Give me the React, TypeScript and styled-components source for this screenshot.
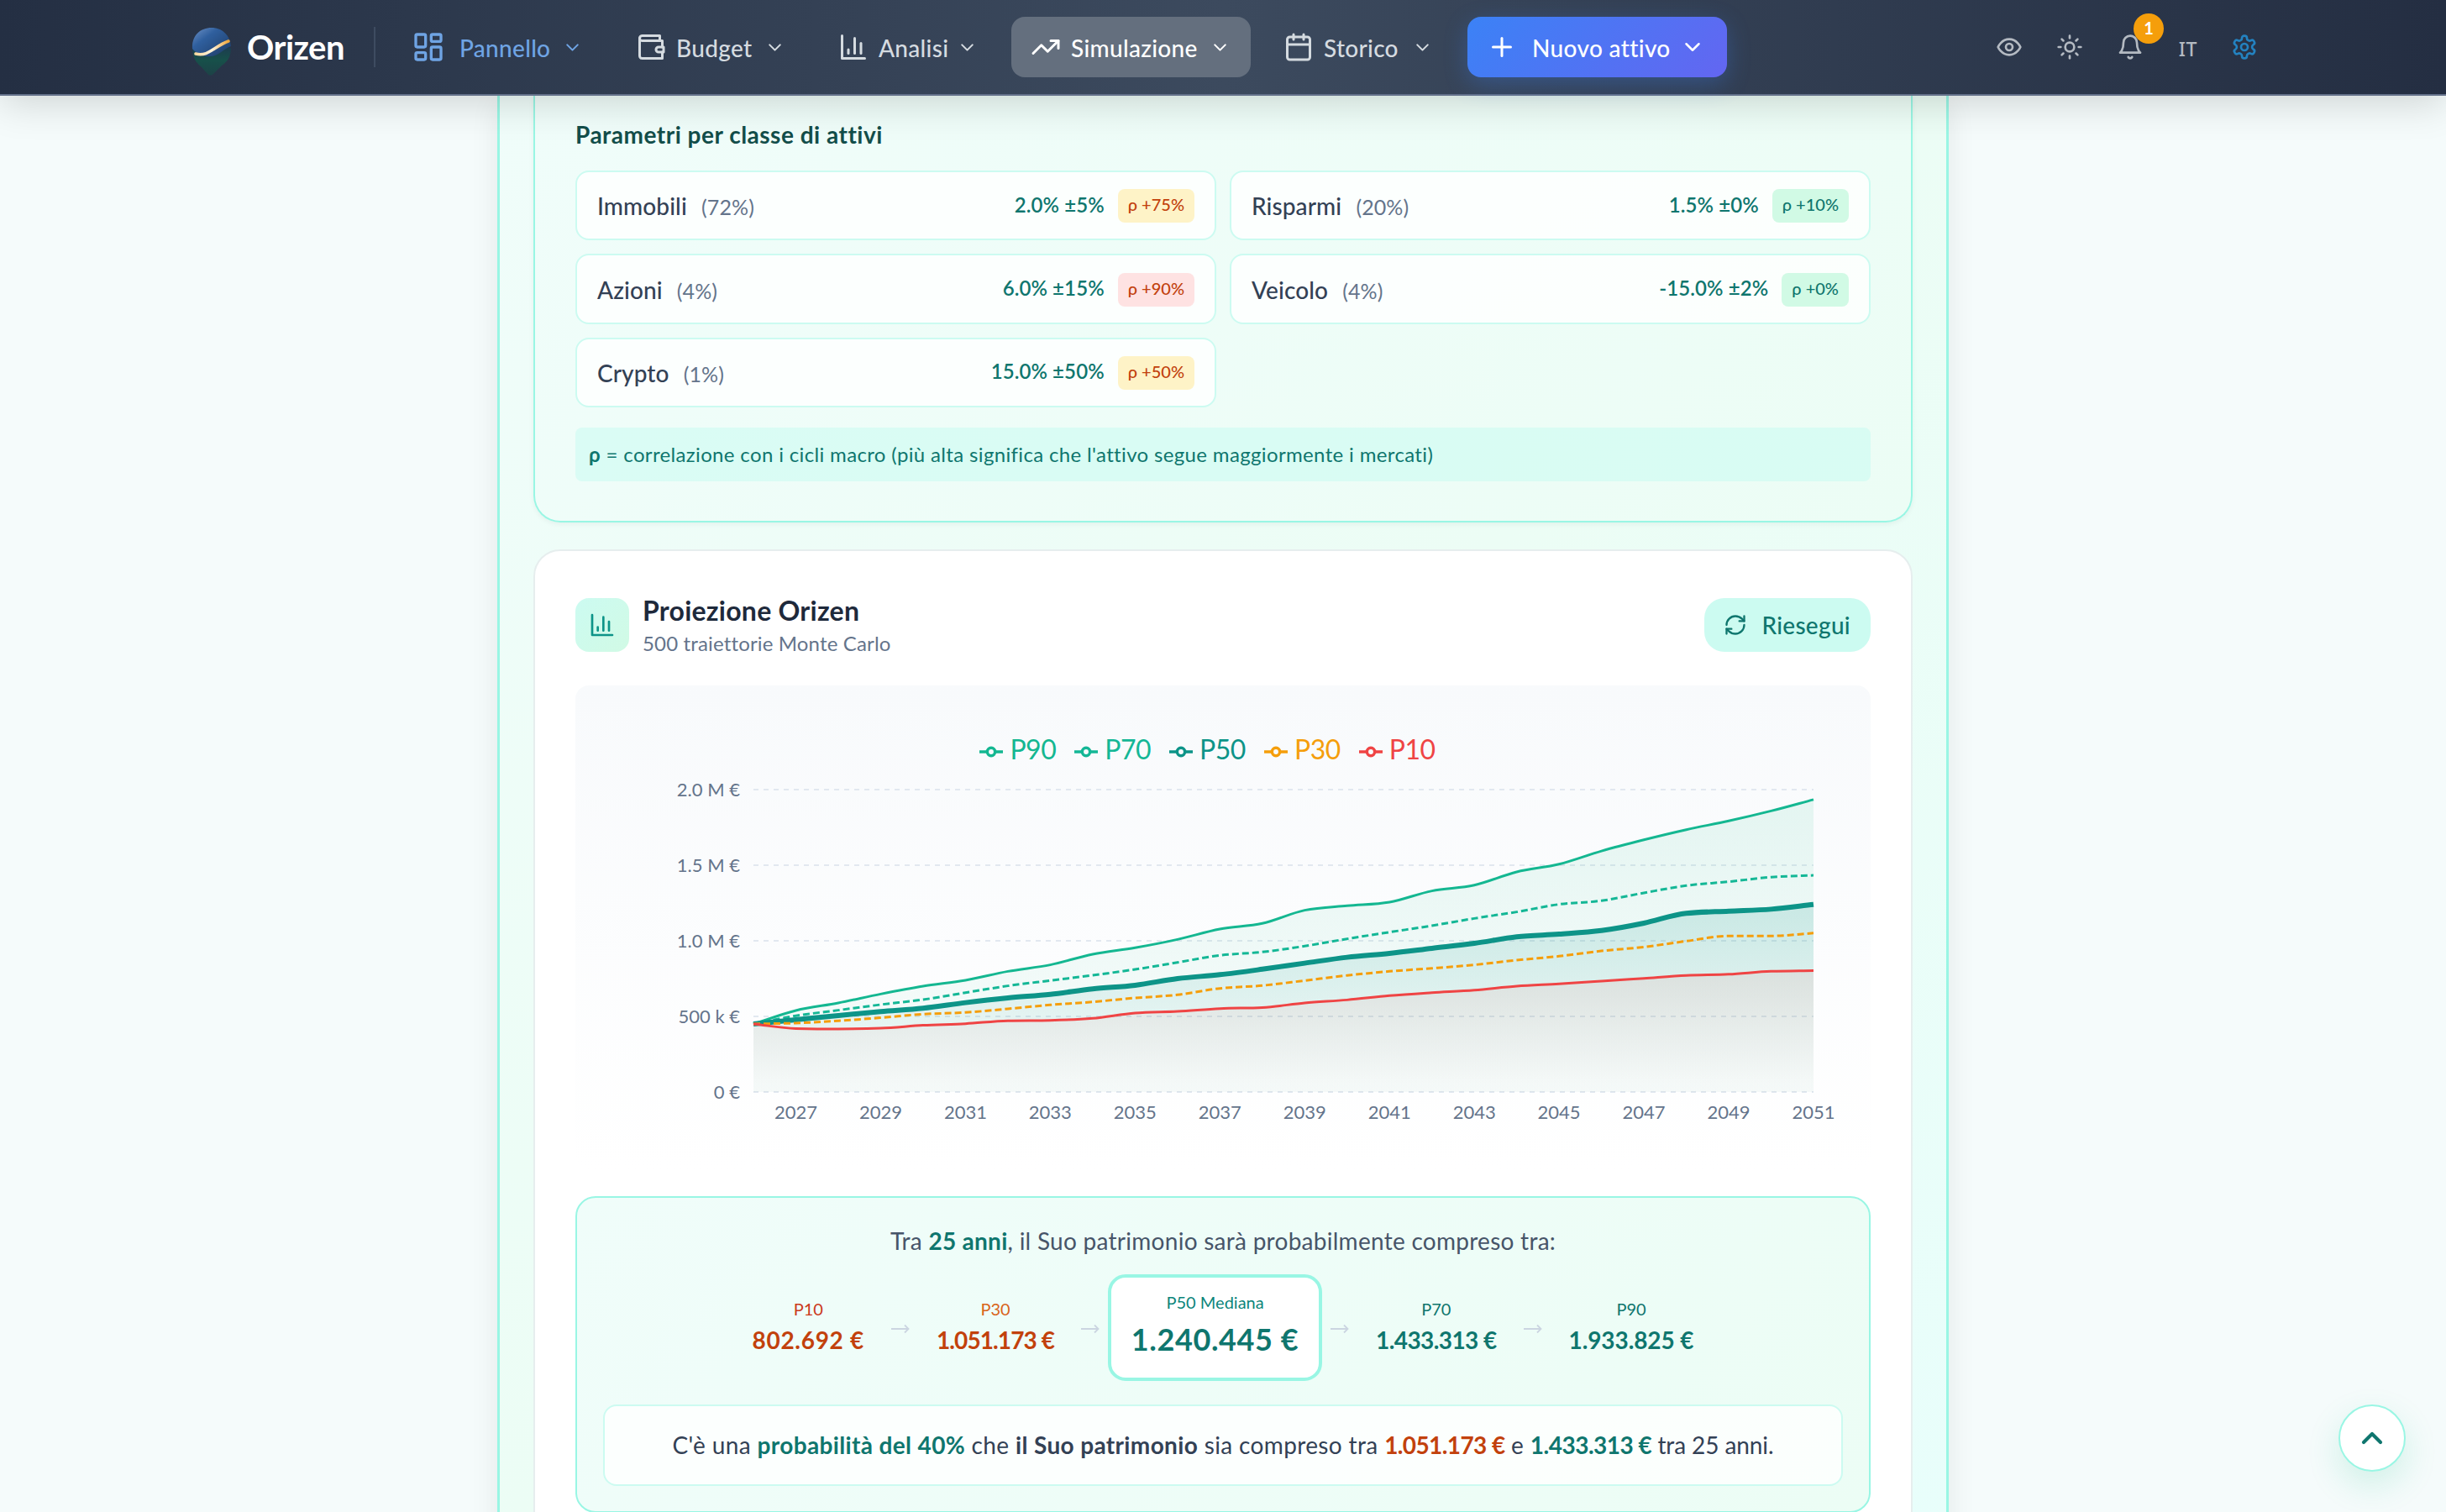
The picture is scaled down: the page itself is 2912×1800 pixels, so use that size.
import { ReactNode } from "react";
import styled, { createGlobalStyle } from "styled-components";

type Tone = "low" | "mid" | "high";

interface Asset {
  name: string;
  share: string;
  rate: string;
  rho: string;
  tone: Tone;
}

const assets: Asset[] = [
  { name: "Immobili", share: "72%", rate: "2.0% ±5%", rho: "+75%", tone: "mid" },
  { name: "Risparmi", share: "20%", rate: "1.5% ±0%", rho: "+10%", tone: "low" },
  { name: "Azioni", share: "4%", rate: "6.0% ±15%", rho: "+90%", tone: "high" },
  { name: "Veicolo", share: "4%", rate: "-15.0% ±2%", rho: "+0%", tone: "low" },
  { name: "Crypto", share: "1%", rate: "15.0% ±50%", rho: "+50%", tone: "mid" },
];

// yearly values in k€, 2026 - 2051
const p90 = [450, 539, 589, 648, 700, 739, 798, 841, 911, 954, 1009, 1078, 1115, 1202, 1232, 1256, 1330, 1368, 1456, 1507, 1594, 1668, 1735, 1793, 1859, 1934];
const p70 = [450, 504, 541, 578, 611, 657, 702, 737, 772, 811, 857, 904, 926, 965, 1013, 1057, 1100, 1148, 1191, 1241, 1265, 1317, 1365, 1391, 1421, 1433];
const p50 = [450, 478, 506, 532, 554, 591, 622, 646, 682, 706, 750, 776, 812, 852, 891, 917, 950, 983, 1026, 1044, 1068, 1117, 1182, 1196, 1209, 1240];
const p30 = [450, 456, 471, 491, 515, 526, 550, 576, 596, 622, 643, 685, 704, 737, 771, 798, 818, 841, 872, 898, 933, 959, 998, 1032, 1032, 1051];
const p10 = [450, 420, 417, 422, 441, 452, 471, 474, 487, 522, 533, 552, 559, 589, 609, 637, 657, 674, 700, 715, 733, 752, 771, 779, 798, 803];

const legend = [
  { label: "P90", color: "#14b791" },
  { label: "P70", color: "#14b796" },
  { label: "P50", color: "#0d9488" },
  { label: "P30", color: "#f59e0b" },
  { label: "P10", color: "#ef4444" },
];

const PLOT = { left: 212, right: 1474, top: 24, bottom: 384, max: 2000 };

const toX = (i: number) => PLOT.left + (i * (PLOT.right - PLOT.left)) / 25;
const toY = (v: number) =>
  PLOT.bottom - (v / PLOT.max) * (PLOT.bottom - PLOT.top);

// monotone cubic through the points, so the curve never overshoots
const linePath = (values: number[]) => {
  const pts = values.map((v, i) => ({ x: toX(i), y: toY(v) }));
  const n = pts.length;
  const slopes: number[] = [];
  for (let i = 0; i < n - 1; i++) {
    slopes.push((pts[i + 1].y - pts[i].y) / (pts[i + 1].x - pts[i].x));
  }
  const tangents = pts.map((_, i) => {
    if (i === 0) return slopes[0];
    if (i === n - 1) return slopes[n - 2];
    const a = slopes[i - 1];
    const b = slopes[i];
    if (a * b <= 0) return 0;
    return (
      Math.sign(a) *
      2 *
      Math.min(Math.abs(a), Math.abs(b), Math.abs(a + b) / 4)
    );
  });
  let d = `M${pts[0].x},${pts[0].y}`;
  for (let i = 0; i < n - 1; i++) {
    const h = (pts[i + 1].x - pts[i].x) / 3;
    d += `C${pts[i].x + h},${pts[i].y + tangents[i] * h},${pts[i + 1].x - h},${
      pts[i + 1].y - tangents[i + 1] * h
    },${pts[i + 1].x},${pts[i + 1].y}`;
  }
  return d;
};

const areaPath = (values: number[]) =>
  `${linePath(values)}L${PLOT.right},${PLOT.bottom}L${PLOT.left},${PLOT.bottom}Z`;

const Icon = ({
  size = 36,
  stroke = 2,
  children,
}: {
  size?: number;
  stroke?: number;
  children: ReactNode;
}) => (
  <IconSvg
    width={size}
    height={size}
    viewBox="0 0 24 24"
    fill="none"
    stroke="currentColor"
    strokeWidth={stroke}
    strokeLinecap="round"
    strokeLinejoin="round"
  >
    {children}
  </IconSvg>
);

const ChevronDown = ({ size = 25 }: { size?: number }) => (
  <Icon size={size}>
    <path d="m6 9 6 6 6-6" />
  </Icon>
);

const BarsIcon = ({ size }: { size: number }) => (
  <Icon size={size}>
    <path d="M3 3v18h18" />
    <path d="M18 17V9" />
    <path d="M13 17V5" />
    <path d="M8 17v-3" />
  </Icon>
);

const Arrow = () => (
  <ArrowSvg width="22" height="12" viewBox="0 0 22 12">
    <path d="M0 6h20M16 1.5 20.5 6 16 10.5" />
  </ArrowSvg>
);

const Logo = () => (
  <svg width="48" height="60" viewBox="0 0 48 60">
    <defs>
      <linearGradient id="logoSky" x1="0" y1="0" x2="1" y2="1">
        <stop offset="0" stopColor="#6f93c8" />
        <stop offset="0.35" stopColor="#2f5f9e" />
        <stop offset="1" stopColor="#1d3a63" />
      </linearGradient>
      <linearGradient id="logoLand" x1="0" y1="0" x2="0" y2="1">
        <stop offset="0" stopColor="#1c3d4f" />
        <stop offset="0.45" stopColor="#17504a" />
        <stop offset="1" stopColor="#1d4247" />
      </linearGradient>
      <linearGradient id="logoSun" x1="0" y1="0" x2="1" y2="0">
        <stop offset="0" stopColor="#f8d9a0" />
        <stop offset="0.5" stopColor="#fff3dc" />
        <stop offset="1" stopColor="#f0a63a" />
      </linearGradient>
    </defs>
    <path
      d="M1 26C1 38 6 44 11 48l9 10c2 1 4 1 6-1l10-10c6-4 11-10 11-21Z"
      fill="url(#logoLand)"
    />
    <path
      d="M1 27C0 12 10 2 24 2c12 0 22 9 23 22-9 3-15 12-24 12-8 1-16-2-22-9Z"
      fill="url(#logoSky)"
    />
    <path
      d="M5 33c15 4 22-9 39-15"
      fill="none"
      stroke="url(#logoSun)"
      strokeWidth="3.5"
      strokeLinecap="round"
    />
  </svg>
);

const Header = () => (
  <Bar>
    <Brand>
      <Logo />
      <BrandName>Orizen</BrandName>
    </Brand>
    <Nav>
      <NavItem $width={251} $tone="current">
        <Icon size={40}>
          <rect x="3" y="3" width="7" height="9" rx="1" />
          <rect x="14" y="3" width="7" height="5" rx="1" />
          <rect x="14" y="12" width="7" height="9" rx="1" />
          <rect x="3" y="16" width="7" height="5" rx="1" />
        </Icon>
        <span>Pannello</span>
        <ChevronDown />
      </NavItem>
      <NavItem $width={225}>
        <Icon>
          <path d="M21 12V7H5a2 2 0 0 1 0-4h14v4" />
          <path d="M3 5v14a2 2 0 0 0 2 2h16v-5" />
          <path d="M18 12a2 2 0 0 0 0 4h4v-4Z" />
        </Icon>
        <span>Budget</span>
        <ChevronDown />
      </NavItem>
      <NavItem $width={213}>
        <BarsIcon size={36} />
        <span>Analisi</span>
        <ChevronDown />
      </NavItem>
      <NavItem $width={285} $tone="open">
        <Icon>
          <path d="m22 7-8.5 8.5-5-5L2 17" />
          <path d="M16 7h6v6" />
        </Icon>
        <span>Simulazione</span>
        <ChevronDown />
      </NavItem>
      <NavItem $width={225}>
        <Icon>
          <rect x="3" y="4" width="18" height="18" rx="2" />
          <path d="M16 2v4" />
          <path d="M8 2v4" />
          <path d="M3 10h18" />
        </Icon>
        <span>Storico</span>
        <ChevronDown />
      </NavItem>
      <NewAsset>
        <Icon>
          <path d="M5 12h14" />
          <path d="M12 5v14" />
        </Icon>
        <span>Nuovo attivo</span>
        <ChevronDown size={30} />
      </NewAsset>
    </Nav>
    <Tools>
      <Tool>
        <Icon size={32}>
          <path d="M2 12s3-7 10-7 10 7 10 7-3 7-10 7-10-7-10-7Z" />
          <circle cx="12" cy="12" r="3" />
        </Icon>
      </Tool>
      <Tool>
        <Icon size={32}>
          <circle cx="12" cy="12" r="4" />
          <path d="M12 2v2" />
          <path d="M12 20v2" />
          <path d="m4.93 4.93 1.41 1.41" />
          <path d="m17.66 17.66 1.41 1.41" />
          <path d="M2 12h2" />
          <path d="M20 12h2" />
          <path d="m6.34 17.66-1.41 1.41" />
          <path d="m19.07 4.93-1.41 1.41" />
        </Icon>
      </Tool>
      <Tool>
        <Icon size={32}>
          <path d="M6 8a6 6 0 0 1 12 0c0 7 3 9 3 9H3s3-2 3-9" />
          <path d="M10.3 21a1.94 1.94 0 0 0 3.4 0" />
        </Icon>
        <Count>1</Count>
      </Tool>
      <Language>IT</Language>
      <Tool $accent>
        <Icon size={32}>
          <path d="M12.22 2h-.44a2 2 0 0 0-2 2v.18a2 2 0 0 1-1 1.73l-.43.25a2 2 0 0 1-2 0l-.15-.08a2 2 0 0 0-2.73.73l-.22.38a2 2 0 0 0 .73 2.73l.15.1a2 2 0 0 1 1 1.72v.51a2 2 0 0 1-1 1.74l-.15.09a2 2 0 0 0-.73 2.73l.22.38a2 2 0 0 0 2.73.73l.15-.08a2 2 0 0 1 2 0l.43.25a2 2 0 0 1 1 1.73V20a2 2 0 0 0 2 2h.44a2 2 0 0 0 2-2v-.18a2 2 0 0 1 1-1.73l.43-.25a2 2 0 0 1 2 0l.15.08a2 2 0 0 0 2.73-.73l.22-.39a2 2 0 0 0-.73-2.73l-.15-.08a2 2 0 0 1-1-1.74v-.5a2 2 0 0 1 1-1.74l.15-.09a2 2 0 0 0 .73-2.73l-.22-.38a2 2 0 0 0-2.73-.73l-.15.08a2 2 0 0 1-2 0l-.43-.25a2 2 0 0 1-1-1.73V4a2 2 0 0 0-2-2z" />
          <circle cx="12" cy="12" r="3" />
        </Icon>
      </Tool>
    </Tools>
  </Bar>
);

const AssetParams = () => (
  <ParamsCard>
    <ParamsTitle>Parametri per classe di attivi</ParamsTitle>
    <AssetGrid>
      {assets.map((asset) => (
        <AssetRow key={asset.name}>
          <AssetName>
            {asset.name} <Share>({asset.share})</Share>
          </AssetName>
          <Rate>{asset.rate}</Rate>
          <Rho $tone={asset.tone}>ρ {asset.rho}</Rho>
        </AssetRow>
      ))}
    </AssetGrid>
    <RhoNote>
      <b>ρ</b> = correlazione con i cicli macro (più alta significa che l'attivo
      segue maggiormente i mercati)
    </RhoNote>
  </ParamsCard>
);

const Chart = () => (
  <ChartBox>
    <Legend>
      {legend.map(({ label, color }) => (
        <LegendItem key={label} $color={color}>
          <svg width="28" height="28" viewBox="0 0 32 32">
            <path
              d="M0,16h10.667A5.333,5.333,0,1,1,21.333,16H32M21.333,16A5.333,5.333,0,1,1,10.667,16"
              fill="none"
              stroke={color}
              strokeWidth="4"
            />
          </svg>
          {label}
        </LegendItem>
      ))}
    </Legend>
    <Plot width="1540" height="476" viewBox="0 0 1540 476">
      <defs>
        <linearGradient id="fill90" x1="0" y1="0" x2="0" y2="1">
          <stop offset="0.05" stopColor="#10b981" stopOpacity="0.09" />
          <stop offset="0.95" stopColor="#10b981" stopOpacity="0.02" />
        </linearGradient>
        <linearGradient id="fill50" x1="0" y1="0" x2="0" y2="1">
          <stop offset="0.05" stopColor="#0d9488" stopOpacity="0.15" />
          <stop offset="0.95" stopColor="#0d9488" stopOpacity="0.02" />
        </linearGradient>
        <linearGradient id="fill10" x1="0" y1="0" x2="0" y2="1">
          <stop offset="0.05" stopColor="#ef4444" stopOpacity="0.08" />
          <stop offset="0.95" stopColor="#ef4444" stopOpacity="0.01" />
        </linearGradient>
      </defs>
      {[2000, 1500, 1000, 500, 0].map((v) => (
        <line
          key={v}
          x1={PLOT.left}
          x2={PLOT.right}
          y1={toY(v)}
          y2={toY(v)}
          stroke="#e2e8f0"
          strokeWidth="2"
          strokeDasharray="6 6"
        />
      ))}
      <path d={areaPath(p90)} fill="url(#fill90)" />
      <path d={areaPath(p50)} fill="url(#fill50)" />
      <path d={areaPath(p10)} fill="url(#fill10)" />
      <Curve d={linePath(p90)} stroke="#14b791" $width={3} />
      <Curve d={linePath(p70)} stroke="#14b796" $width={3} $dash="8 4" />
      <Curve d={linePath(p50)} stroke="#0d9488" $width={6} />
      <Curve d={linePath(p30)} stroke="#f59e0b" $width={3} $dash="8 4" />
      <Curve d={linePath(p10)} stroke="#ef4444" $width={3} />
      {["2.0 M €", "1.5 M €", "1.0 M €", "500 k €", "0 €"].map((label, i) => (
        <AxisText key={label} x={196} y={toY(2000 - i * 500) + 8} textAnchor="end">
          {label}
        </AxisText>
      ))}
      {Array.from({ length: 13 }, (_, i) => (
        <AxisText key={i} x={toX(i * 2 + 1)} y={416} textAnchor="middle">
          {2027 + i * 2}
        </AxisText>
      ))}
    </Plot>
  </ChartBox>
);

const Projection = () => (
  <ProjectionCard>
    <CardHeader>
      <IconTile>
        <BarsIcon size={32} />
      </IconTile>
      <Titles>
        <CardTitle>Proiezione Orizen</CardTitle>
        <CardSubtitle>500 traiettorie Monte Carlo</CardSubtitle>
      </Titles>
      <RerunButton>
        <Icon size={28}>
          <path d="M3 12a9 9 0 0 1 9-9 9.75 9.75 0 0 1 6.74 2.74L21 8" />
          <path d="M21 3v5h-5" />
          <path d="M21 12a9 9 0 0 1-9 9 9.75 9.75 0 0 1-6.74-2.74L3 16" />
          <path d="M8 16H3v5" />
        </Icon>
        Riesegui
      </RerunButton>
    </CardHeader>
    <Chart />
    <Summary>
      <Lead>
        Tra <Strong $color="#0f766e">25 anni</Strong>, il Suo patrimonio sarà
        probabilmente compreso tra:
      </Lead>
      <Stats>
        <Stat>
          <StatLabel $color="#cb3a1c">P10</StatLabel>
          <StatValue $color="#c2410c">802.692 €</StatValue>
        </Stat>
        <Arrow />
        <Stat>
          <StatLabel $color="#d9641a">P30</StatLabel>
          <StatValue $color="#c2410c" $spacing={-0.9}>
            1.051.173 €
          </StatValue>
        </Stat>
        <Arrow />
        <Median>
          <StatLabel $color="#0d857b">P50 Mediana</StatLabel>
          <MedianValue>1.240.445 €</MedianValue>
        </Median>
        <Arrow />
        <Stat>
          <StatLabel $color="#0f766e">P70</StatLabel>
          <StatValue $color="#0f766e" $spacing={-0.6}>
            1.433.313 €
          </StatValue>
        </Stat>
        <Arrow />
        <Stat>
          <StatLabel $color="#0f766e">P90</StatLabel>
          <StatValue $color="#0f766e" $spacing={-0.1}>
            1.933.825 €
          </StatValue>
        </Stat>
      </Stats>
      <Odds>
        <p>
          C'è una <Strong $color="#0f766e">probabilità del 40%</Strong> che{" "}
          <Strong>il Suo patrimonio</Strong> sia compreso tra{" "}
          <Amount $color="#c2410c" $spacing={-0.6}>
            1.051.173 €
          </Amount>{" "}
          e{" "}
          <Amount $color="#0f766e" $spacing={-0.5}>
            1.433.313 €
          </Amount>
          <Horizon> tra 25 anni.</Horizon>
        </p>
      </Odds>
    </Summary>
  </ProjectionCard>
);

const App = () => (
  <Page>
    <GlobalStyle />
    <Header />
    <Content>
      <AssetParams />
      <Projection />
    </Content>
    <ToTop>
      <Icon size={40} stroke={2.5}>
        <path d="m18 15-6-6-6 6" />
      </Icon>
    </ToTop>
  </Page>
);

const GlobalStyle = createGlobalStyle`
  * {
    box-sizing: border-box;
  }
  body {
    margin: 0;
    overflow: hidden;
    background: #f5fbfb;
    color: #334155;
    font-family: Lato, "Liberation Sans", sans-serif;
    font-size: 28px;
  }
  p, h2, h3 {
    margin: 0;
  }
  button {
    border: 0;
    font: inherit;
  }
`;

const IconSvg = styled.svg`
  display: block;
  flex: none;
`;

const Page = styled.div`
  height: 1800px;
  overflow: hidden;
  display: flex;
  flex-direction: column;
  align-items: center;
`;

const Bar = styled.header`
  position: relative;
  z-index: 2;
  flex: none;
  align-self: stretch;
  display: flex;
  align-items: center;
  height: 114px;
  padding: 0 206px 0 228px;
  border-bottom: 2px solid #64718a;
  background: linear-gradient(90deg, #242f43 0%, #3c4a5e 50%, #242e42 100%);
  box-shadow: 0 8px 48px rgba(0, 0, 0, 0.16);
`;

const Brand = styled.div`
  display: flex;
  align-items: center;
  width: 219px;
  height: 48px;
  border-right: 2px solid #3e4c61;

  svg {
    margin: 10px 18px 0 0;
  }
`;

const BrandName = styled.span`
  padding-bottom: 1px;
  font-size: 40px;
  font-weight: 700;
  letter-spacing: -0.5px;
  color: #fff;
`;

const Nav = styled.nav`
  display: flex;
  align-items: center;
  gap: 16px;
  margin-left: 20px;
`;

const NavItem = styled.button<{ $width: number; $tone?: "current" | "open" }>`
  display: flex;
  align-items: center;
  width: ${(p) => p.$width}px;
  height: 72px;
  padding: 0 24px 0 23px;
  border-radius: 16px;
  background: ${(p) => (p.$tone === "open" ? "#646f7e" : "transparent")};
  color: ${(p) =>
    p.$tone === "current" ? "#6fa4e4" : p.$tone === "open" ? "#fff" : "#d5dbe0"};
  font-weight: 500;
  letter-spacing: 0.3px;
  white-space: nowrap;

  span {
    margin-left: ${(p) => (p.$tone === "current" ? 17 : 12)}px;
    padding-top: 1px;
  }

  svg:last-child {
    margin-left: auto;
  }
`;

const NewAsset = styled(NavItem).attrs({ $width: 309 })`
  margin-left: 1px;
  background: linear-gradient(135deg, #3b82f6, #6366f1);
  box-shadow: 0 8px 28px rgba(59, 130, 246, 0.3);
  color: #fff;
  letter-spacing: 0.35px;

  span {
    margin-left: 18px;
  }

  svg:last-child {
    margin-right: 2px;
  }
`;

const Tools = styled.div`
  display: flex;
  align-items: center;
  margin-left: auto;
`;

const Tool = styled.div<{ $accent?: boolean }>`
  position: relative;
  display: flex;
  justify-content: center;
  width: ${(p) => (p.$accent ? 68 : 72)}px;
  color: ${(p) => (p.$accent ? "#2382c0" : "#b4bac2")};
`;

const Language = styled.span`
  width: 66px;
  padding-top: 4px;
  text-align: center;
  font-family: "Noto Sans", sans-serif;
  font-size: 23px;
  font-weight: 500;
  letter-spacing: 0.6px;
  color: #b4bac2;
`;

const Count = styled.span`
  position: absolute;
  top: -24px;
  left: 40px;
  width: 36px;
  height: 36px;
  border-radius: 50%;
  background: #f59e0b;
  color: #fff;
  font-size: 20px;
  font-weight: 700;
  line-height: 35px;
  text-align: center;
`;

const Content = styled.main`
  flex: none;
  width: 1728px;
  height: 1720px;
  padding: 0 40px;
  border: solid #99f6e4;
  border-width: 0 3px;
  background: linear-gradient(135deg, #f0fdfa 0%, #ecfdf5 50%, #e8fefb 100%);
  box-shadow: 0 8px 32px rgba(0, 0, 0, 0.08);
`;

const ParamsCard = styled.section`
  padding: 26px 48px 47px;
  border: 2px solid #99f6e4;
  border-top: 0;
  border-radius: 0 0 32px 32px;
  background: linear-gradient(135deg, #f0fdfa, #ecfdf5);
  box-shadow: 0 2px 6px rgba(0, 0, 0, 0.05);
`;

const ParamsTitle = styled.h3`
  margin-bottom: 23px;
  font-size: 28px;
  line-height: 40px;
  letter-spacing: 0.5px;
  color: #134e4a;
`;

const AssetGrid = styled.div`
  display: grid;
  grid-template-columns: 1fr 1fr;
  gap: 16px;
`;

const AssetRow = styled.div`
  display: flex;
  align-items: center;
  gap: 16px;
  height: 83.4px;
  padding: 0 24px;
  border: 2px solid #ccfbf1;
  border-radius: 16px;
  background: rgba(255, 255, 255, 0.8);
`;

const AssetName = styled.span`
  flex: 1;
  padding-top: 1px;
  font-weight: 500;
  letter-spacing: 0.1px;
`;

const Share = styled.span`
  margin-left: 10px;
  font-size: 25px;
  font-weight: 400;
  color: #64748b;
`;

const Rate = styled.span`
  padding-bottom: 3px;
  font-size: 24px;
  font-weight: 600;
  color: #0f766e;
  letter-spacing: 0.1px;
`;

const rhoTones = {
  low: { bg: "#d1fae5", fg: "#0f766e" },
  mid: { bg: "#fef3c7", fg: "#c2410c" },
  high: { bg: "#fee2e2", fg: "#c2410c" },
};

const Rho = styled.span<{ $tone: Tone }>`
  height: 40px;
  margin-top: 1px;
  padding: 0 12px;
  border-radius: 8px;
  background: ${(p) => rhoTones[p.$tone].bg};
  color: ${(p) => rhoTones[p.$tone].fg};
  font-size: 20px;
  font-weight: 500;
  line-height: 37px;
`;

const RhoNote = styled.p`
  margin-top: 24px;
  padding: 0 16px;
  border-radius: 8px;
  background: rgba(204, 251, 241, 0.6);
  color: #0f766e;
  font-size: 24px;
  line-height: 64px;
  letter-spacing: 0.35px;
`;

const ProjectionCard = styled.section`
  height: 1300px;
  margin-top: 31.8px;
  padding: 56px 48px 0;
  border: 2px solid #e6eeee;
  border-radius: 32px;
  background: #fff;
`;

const CardHeader = styled.div`
  display: flex;
  align-items: center;
  height: 64px;
  margin-bottom: 40px;
`;

const IconTile = styled.div`
  display: grid;
  place-items: center;
  width: 64px;
  height: 64px;
  border-radius: 16px;
  background: linear-gradient(135deg, #ccfbf1, #d1fae5);
  color: #0d9488;
`;

const Titles = styled.div`
  flex: 1;
  padding: 3px 0 0 16px;
`;

const CardTitle = styled.h2`
  font-size: 32px;
  line-height: 42px;
  letter-spacing: 0.25px;
  color: #1e293b;
`;

const CardSubtitle = styled.p`
  font-size: 24px;
  line-height: 36px;
  letter-spacing: 0.15px;
  color: #64748b;
`;

const RerunButton = styled.button`
  display: flex;
  align-items: center;
  justify-content: space-between;
  width: 198px;
  height: 64px;
  padding: 0 24px 0 23px;
  border-radius: 24px;
  background: #ccfbf1;
  color: #0f766e;
  font-weight: 500;
  letter-spacing: 0.3px;
`;

const ChartBox = styled.div`
  height: 576px;
  padding-top: 52px;
  border-radius: 16px;
  background: linear-gradient(180deg, #f8fafc, #fff);
`;

const Legend = styled.div`
  display: flex;
  justify-content: center;
  gap: 22px;
  height: 48px;
  padding-right: 37px;
`;

const LegendItem = styled.span<{ $color: string }>`
  display: flex;
  align-items: center;
  gap: 8px;
  color: ${(p) => p.$color};
  font-size: 32px;
  line-height: 50px;
  letter-spacing: -0.5px;

  svg {
    margin-top: 6px;
  }
`;

const Plot = styled.svg`
  display: block;
`;

const Curve = styled.path<{ $width: number; $dash?: string }>`
  fill: none;
  stroke-width: ${(p) => p.$width}px;
  stroke-dasharray: ${(p) => p.$dash ?? "none"};
`;

const AxisText = styled.text`
  fill: #64748b;
  font-size: 22px;
`;

const Summary = styled.div`
  margin-top: 32px;
  padding: 30px 31px;
  border: 2px solid #99f6e4;
  border-radius: 24px;
  background: linear-gradient(135deg, #f0fdfa, #ecfdf5);
`;

const Lead = styled.p`
  line-height: 43px;
  text-align: center;
  letter-spacing: 0.27px;
  color: #475569;
`;

const Strong = styled.strong<{ $color?: string }>`
  color: ${(p) => p.$color ?? "inherit"};
`;

const Amount = styled(Strong)<{ $spacing: number }>`
  letter-spacing: ${(p) => p.$spacing}px;
`;

const Horizon = styled.span`
  letter-spacing: -0.1px;
`;

const Stats = styled.div`
  display: flex;
  align-items: center;
  justify-content: center;
  gap: 16px;
  margin: 18px 0 28px;
`;

const Stat = styled.div`
  margin-top: -2px;
  padding: 0 16px;
  text-align: center;
`;

const StatLabel = styled.div<{ $color: string }>`
  font-size: 20px;
  line-height: 30px;
  color: ${(p) => p.$color};
`;

const StatValue = styled.div<{ $color: string; $spacing?: number }>`
  margin-top: 2px;
  font-weight: 700;
  line-height: 40px;
  letter-spacing: ${(p) => p.$spacing ?? 0.7}px;
  color: ${(p) => p.$color};
`;

const Median = styled.div`
  width: 255px;
  height: 127px;
  margin: 0 -6px;
  padding-top: 14px;
  border: 4px solid #99f6e4;
  border-radius: 21px;
  background: #fff;
  text-align: center;
`;

const MedianValue = styled.div`
  margin-top: 5px;
  font-size: 36px;
  font-weight: 700;
  line-height: 48px;
  letter-spacing: 0.6px;
  color: #0f766e;
`;

const ArrowSvg = styled.svg`
  flex: none;
  margin-top: 4px;
  fill: none;
  stroke: #cbd5e1;
  stroke-width: 1.8px;
`;

const Odds = styled.div`
  display: flex;
  align-items: center;
  justify-content: center;
  height: 97px;
  border: 2px solid #ccfbf1;
  border-radius: 16px;
  background: rgba(255, 255, 255, 0.8);
  letter-spacing: 0.36px;
`;

const ToTop = styled.button`
  position: fixed;
  right: 48px;
  bottom: 48px;
  display: grid;
  place-items: center;
  width: 80px;
  height: 80px;
  padding: 0;
  border: 2px solid #99f6e4;
  border-radius: 50%;
  background: #fff;
  box-shadow: 0 16px 40px rgba(16, 185, 129, 0.16);
  color: #0f766e;
`;

export default App;
